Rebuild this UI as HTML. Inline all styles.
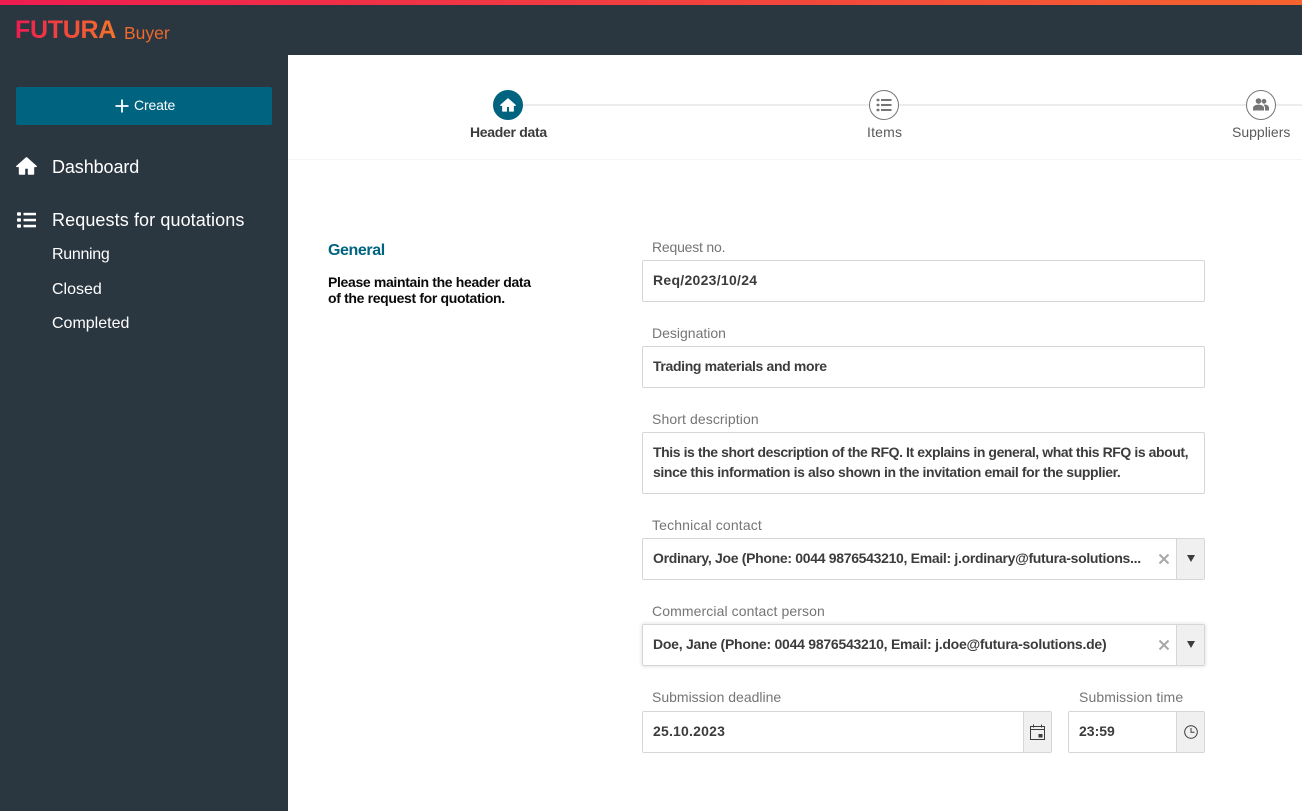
<!DOCTYPE html>
<html><head><meta charset="utf-8"><style>
*{box-sizing:border-box}
html,body{margin:0;padding:0;width:1302px;height:811px;overflow:hidden;background:#fff;font-family:"Liberation Sans",sans-serif}
.a{position:absolute;white-space:nowrap}
.lab{font-size:14px;color:#757575;line-height:16px}
.box{position:absolute;border:1px solid #d6d6d6;border-radius:2px;background:#fff}
.val{position:absolute;font-size:14px;font-weight:bold;color:#3c3c3c;line-height:20px;white-space:nowrap}
.side{position:absolute;background:#f0f0f0;border-left:1px solid #d6d6d6;top:0;bottom:0;right:0}
.nav{color:#fff;line-height:20px}
.step{position:absolute;width:30px;height:30px;border-radius:50%;border:1px solid #757575;background:#fff;top:90px}
.x{position:absolute;right:34px;top:13px}
.tri{position:absolute;left:10px;top:16px;width:0;height:0;border-left:4px solid transparent;border-right:4px solid transparent;border-top:7px solid #3c3c3c}
</style></head><body>
<div class="a" style="left:0;top:0;width:1302px;height:55px;background:#2a3640"></div>
<div class="a" style="left:0;top:55px;width:288px;height:756px;background:#2a3640"></div>
<div class="a" style="left:0;top:0;width:1302px;height:5px;background:linear-gradient(90deg,#ee1c50,#f5632f)"></div>
<div class="a" style="left:15px;top:16px;font-size:25px;font-weight:bold;letter-spacing:-.3px;line-height:28px;background:linear-gradient(90deg,#ee1c50,#f4742a);-webkit-background-clip:text;background-clip:text;color:transparent">FUTURA</div>
<div class="a" style="left:124px;top:22px;font-size:17.5px;line-height:22px;color:#f0692d">Buyer</div>

<div class="a" style="left:16px;top:87px;width:256px;height:38px;background:#006480;border-radius:2px"></div>
<svg class="a" style="left:115px;top:99px" width="14" height="14" viewBox="0 0 14 14"><path d="M7 .5v13M.5 7h13" stroke="#fff" stroke-width="1.8" fill="none"/></svg>
<div class="a" style="left:134px;top:96px;font-size:14px;letter-spacing:-.15px;line-height:18px;color:#fff">Create</div>

<svg class="a" style="left:16px;top:157px" width="21" height="18" viewBox="0 0 21 18"><path d="M10.5 .8 .8 9.400h2.700V17h5v-6h4v6h5V9.400h2.700z" fill="#fff" stroke="#fff" stroke-width="1.400" stroke-linejoin="round"/></svg>
<div class="a nav" style="left:52px;top:157px;font-size:18px;letter-spacing:-.1px">Dashboard</div>
<svg class="a" style="left:16px;top:211px" width="21" height="18" viewBox="0 0 21 18" fill="#fff"><rect x="1" y="1.200" width="4" height="3.600" rx="1"/><rect x="1" y="7.200" width="4" height="3.600" rx="1"/><rect x="1" y="13.200" width="4" height="3.600" rx="1"/><rect x="7.500" y="1.800" width="12.500" height="2.500"/><rect x="7.500" y="7.800" width="12.500" height="2.500"/><rect x="7.500" y="13.800" width="12.500" height="2.500"/></svg>
<div class="a nav" style="left:52px;top:210px;font-size:18px;letter-spacing:.1px">Requests for quotations</div>
<div class="a nav" style="left:52px;top:245px;font-size:16px;letter-spacing:-.3px">Running</div>
<div class="a nav" style="left:52px;top:280px;font-size:16px">Closed</div>
<div class="a nav" style="left:52px;top:314px;font-size:16px">Completed</div>

<div class="a" style="left:288px;top:159px;width:1014px;height:1px;background:#f4f4f4"></div>
<div class="a" style="left:508px;top:104px;width:794px;height:2px;background:#ececec"></div>
<div class="step" style="left:493px;background:#006480;border-color:#006480"></div>
<svg class="a" style="left:500px;top:98px" width="16" height="14" viewBox="0 0 21 18"><path d="M10.5 .8 .8 9.400h2.700V17h5v-6h4v6h5V9.400h2.700z" fill="#fff" stroke="#fff" stroke-width="1.400" stroke-linejoin="round"/></svg>
<div class="step" style="left:869px"></div>
<svg class="a" style="left:876px;top:98px" width="16" height="14" viewBox="0 0 16 14" fill="#757575"><rect x="0.500" y="0.700" width="3" height="2.600" rx=".9"/><rect x="0.500" y="5.700" width="3" height="2.600" rx=".9"/><rect x="0.500" y="10.700" width="3" height="2.600" rx=".9"/><rect x="5" y="1" width="10.500" height="2"/><rect x="5" y="6" width="10.500" height="2"/><rect x="5" y="11" width="10.500" height="2"/></svg>
<div class="step" style="left:1246px"></div>
<svg class="a" style="left:1253px;top:98px" width="16" height="13" viewBox="0 0 16 13" fill="#757575"><circle cx="5.500" cy="3" r="2.800"/><circle cx="11" cy="3.300" r="2.400"/><path d="M0 12.500V10c0-2 2.400-3.400 5.500-3.400S11 8 11 10v2.500z"/><path d="M11.500 6.500c2.500 0 4.500 1.300 4.500 3.300v2.700h-4V10c0-1.300-.6-2.500-1.500-3.300z"/></svg>
<div class="a" style="left:470px;top:124px;font-size:14px;font-weight:bold;letter-spacing:-.3px;line-height:16px;color:#3c3c3c">Header data</div>
<div class="a" style="left:867px;top:124px;font-size:14px;letter-spacing:.2px;line-height:16px;color:#5a5a5a">Items</div>
<div class="a" style="left:1232px;top:124px;font-size:14px;line-height:16px;color:#5a5a5a">Suppliers</div>

<div class="a" style="left:328px;top:241px;font-size:16px;font-weight:bold;letter-spacing:-.4px;line-height:19px;color:#006480">General</div>
<div class="a" style="left:328px;top:274px;font-size:14px;font-weight:bold;letter-spacing:-.34px;line-height:16px;color:#0a0a0a">Please maintain the header data<br>of the request for quotation.</div>

<div class="a lab" style="left:652px;top:239px;letter-spacing:-.2px">Request no.</div>
<div class="box" style="left:642px;top:260px;width:563px;height:42px"></div>
<div class="val" style="left:653px;top:270px;letter-spacing:.28px">Req/2023/10/24</div>

<div class="a lab" style="left:652px;top:325px">Designation</div>
<div class="box" style="left:642px;top:346px;width:563px;height:42px"></div>
<div class="val" style="left:653px;top:356px;letter-spacing:-.35px">Trading materials and more</div>

<div class="a lab" style="left:652px;top:411px;letter-spacing:.1px">Short description</div>
<div class="box" style="left:642px;top:432px;width:563px;height:62px"></div>
<div class="val" style="left:653px;top:442px;letter-spacing:-.42px">This is the short description of the RFQ. It explains in general, what this RFQ is about,</div>
<div class="val" style="left:653px;top:462px;letter-spacing:-.38px">since this information is also shown in the invitation email for the supplier.</div>

<div class="a lab" style="left:652px;top:517px;letter-spacing:.15px">Technical contact</div>
<div class="box" style="left:642px;top:538px;width:563px;height:42px"><div class="x"><svg width="12" height="12" viewBox="0 0 12 12"><path d="M1.500 1.500l9 9M10.500 1.500l-9 9" stroke="#a8a8a8" stroke-width="2" fill="none"/></svg></div><div class="side" style="width:28px"><div class="tri"></div></div></div>
<div class="val" style="left:653px;top:548px;letter-spacing:-.31px">Ordinary, Joe (Phone: 0044 9876543210, Email: j.ordinary@futura-solutions...</div>

<div class="a lab" style="left:652px;top:603px;letter-spacing:.1px">Commercial contact person</div>
<div class="box" style="left:642px;top:624px;width:563px;height:42px;box-shadow:0 0 3px 1px rgba(0,0,0,.1)"><div class="x"><svg width="12" height="12" viewBox="0 0 12 12"><path d="M1.500 1.500l9 9M10.500 1.500l-9 9" stroke="#a8a8a8" stroke-width="2" fill="none"/></svg></div><div class="side" style="width:28px"><div class="tri"></div></div></div>
<div class="val" style="left:653px;top:634px;letter-spacing:-.25px">Doe, Jane (Phone: 0044 9876543210, Email: j.doe@futura-solutions.de)</div>

<div class="a lab" style="left:652px;top:689px">Submission deadline</div>
<div class="box" style="left:642px;top:711px;width:410px;height:42px"><div class="side" style="width:28px"><svg style="position:absolute;left:6px;top:12px" width="15" height="16" viewBox="0 0 15 16"><path d="M.5 2.500h14v13H.5zM.5 5.500h14M3.500.500v3M11.500.500v3" stroke="#3c3c3c" fill="none"/><rect x="8.500" y="10" width="4" height="3.500" fill="#3c3c3c"/></svg></div></div>
<div class="val" style="left:653px;top:721px;letter-spacing:.2px">25.10.2023</div>

<div class="a lab" style="left:1079px;top:689px;letter-spacing:.1px">Submission time</div>
<div class="box" style="left:1068px;top:711px;width:137px;height:42px"><div class="side" style="width:28px"><svg style="position:absolute;left:7px;top:13px" width="14" height="14" viewBox="0 0 14 14"><circle cx="7" cy="7" r="6.300" stroke="#3c3c3c" fill="none"/><path d="M7 3v4.200h3.500" stroke="#3c3c3c" fill="none"/></svg></div></div>
<div class="val" style="left:1079px;top:721px">23:59</div>
</body></html>
